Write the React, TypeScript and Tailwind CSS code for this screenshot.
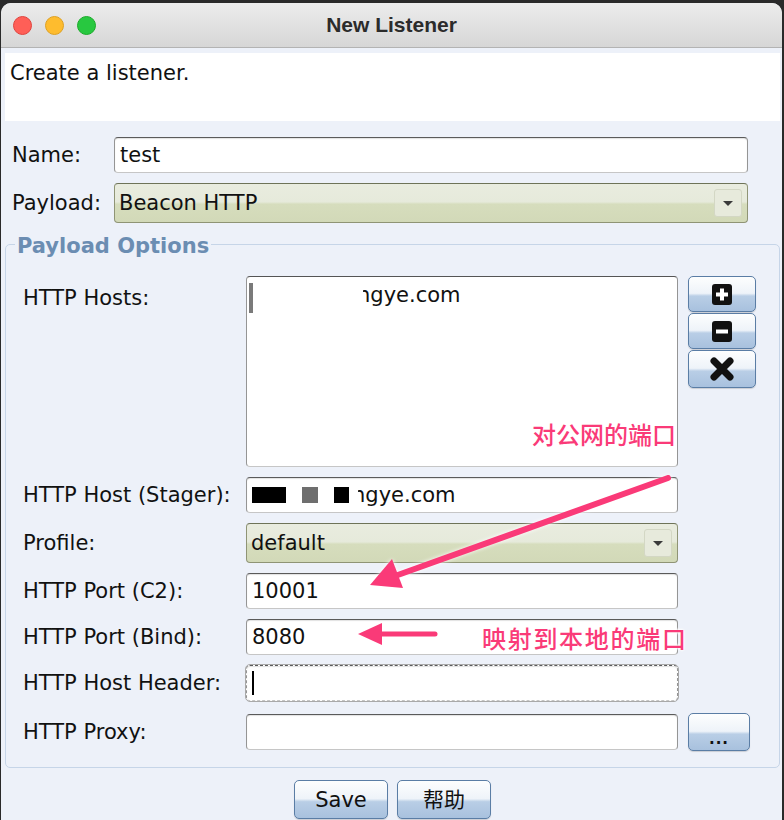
import React from 'react';

const ui = 'font-["DejaVu_Sans","Noto_Sans_CJK_SC",sans-serif]';

const inputBox =
  'h-[36px] w-[432px] rounded-[4px] border border-[#959595] border-t-[#5a5a5a] border-b-[#c6c6c6] bg-white pl-[5px] flex items-center shadow-[inset_0_1px_1px_rgba(0,0,0,0.12)]';

const aqua =
  'rounded-[5px] border border-[#5a7da5] bg-[linear-gradient(to_bottom,#fdfefe_0%,#eef3f9_48%,#b9cee6_56%,#a8c1de_100%)] shadow-[0_1px_1px_rgba(0,0,0,0.15)] flex items-center justify-center';

function ComboArrow() {
  return (
    <div className="h-[28px] w-[28px] rounded-[3px] border border-[#d3d7c4] bg-[#e7eadc] flex items-center justify-center">
      <svg width="10" height="5" viewBox="0 0 10 5">
        <path d="M0 0 H10 L5 5 Z" fill="#3a3a3a" />
      </svg>
    </div>
  );
}

function Combo({ value, width }: { value: string; width: string }) {
  return (
    <div
      className={`${width} h-[40px] rounded-[4px] border border-[#8f9475] border-t-[#6e7358] bg-[linear-gradient(to_bottom,#e9ecdf_0%,#e6eadb_47%,#d6ddbd_53%,#d2d9b8_100%)] pl-[4px] pr-[5px] flex items-center justify-between`}
    >
      <span>{value}</span>
      <ComboArrow />
    </div>
  );
}

function Row({ label, children, extra }: { label: string; children: React.ReactNode; extra?: React.ReactNode }) {
  return (
    <div className="flex items-center">
      <div className="w-[223px] shrink-0">{label}</div>
      {children}
      {extra && <div className="ml-[10px]">{extra}</div>}
    </div>
  );
}

export default function App() {
  return (
    <div className={`relative w-[784px] h-[820px] overflow-hidden bg-[#2a2a2a] pt-[3px] pl-px pr-[2px] ${ui} text-[21px] leading-[24px] text-[#111]`}>
      <div className="h-[830px] rounded-[10px] bg-[#edf1f9] flex flex-col">
        {/* title bar */}
        <div className="h-[45px] shrink-0 rounded-t-[10px] border-b border-[#b3b3b3] bg-[linear-gradient(to_bottom,#ececec,#d6d6d6)] grid grid-cols-[1fr_auto_1fr] items-center">
          <div className="flex items-center gap-[13px] pl-[12px]">
            <span className="h-[19px] w-[19px] rounded-full bg-[#ff5f57] border border-[#e0443e]" />
            <span className="h-[19px] w-[19px] rounded-full bg-[#febc2e] border border-[#dea123]" />
            <span className="h-[19px] w-[19px] rounded-full bg-[#28c840] border border-[#1aab29]" />
          </div>
          <div className='font-["Liberation_Sans",sans-serif] font-bold text-[21px] text-[#2b2b2b]'>New Listener</div>
          <div />
        </div>

        <div className="flex flex-col pl-[4px] pr-[2px] pt-[5px]">
          {/* description */}
          <div className="h-[68px] bg-white px-[5px] pt-[8px]">Create a listener.</div>

          {/* name / payload */}
          <div className="mt-[16px] flex flex-col gap-[10px] pl-[7px]">
            <div className="flex items-center">
              <div className="w-[102px]">Name:</div>
              <div className={`${inputBox} h-[34px] w-[634px]`}>test</div>
            </div>
            <div className="flex items-center">
              <div className="w-[102px]">Payload:</div>
              <Combo value="Beacon HTTP" width="w-[634px]" />
            </div>
          </div>

          {/* payload options */}
          <fieldset className="mt-[8px] w-[775px] rounded-[5px] border border-[#c6d5e8] pb-[16px]">
            <legend className="ml-[9px] px-[2px] pt-[3px] text-[21px] font-bold text-[#6b8db2]">Payload Options</legend>
            <div className="pl-[17px] pt-[18px] flex flex-col gap-[10px]">
              <div className="flex items-start">
                <div className="w-[223px] shrink-0 pt-[10px]">HTTP Hosts:</div>
                <div className="h-[191px] w-[432px] rounded-[4px] border border-[#959595] border-t-[#555] border-b-[#c6c6c6] bg-white flex items-start pt-[6px]">
                  <span className="ml-[2px] h-[30px] w-[4px] bg-[#7a7a7a]" />
                  <span className="ml-[104px] [clip-path:inset(0_0_0_6px)]">ngye.com</span>
                </div>
                <div className="ml-[10px] flex flex-col gap-px">
                  <button className={`${aqua} h-[36px] w-[68px]`}>
                    <svg width="20" height="21" viewBox="0 0 20 21">
                      <rect x="0" y="0" width="20" height="21" rx="3" fill="#111" />
                      <rect x="8" y="4.5" width="4" height="12" fill="#fff" />
                      <rect x="4" y="8.5" width="12" height="4" fill="#fff" />
                    </svg>
                  </button>
                  <button className={`${aqua} h-[36px] w-[68px]`}>
                    <svg width="20" height="21" viewBox="0 0 20 21">
                      <rect x="0" y="0" width="20" height="21" rx="3" fill="#111" />
                      <rect x="4" y="8.5" width="12" height="4" fill="#fff" />
                    </svg>
                  </button>
                  <button className={`${aqua} h-[38px] w-[68px]`}>
                    <svg width="24" height="24" viewBox="0 0 24 24">
                      <path d="M4 4 L20 20 M20 4 L4 20" stroke="#111" strokeWidth="7" strokeLinecap="round" />
                    </svg>
                  </button>
                </div>
              </div>

              <Row label="HTTP Host (Stager):">
                <div className={inputBox}>
                  <span className="h-[16px] w-[34px] bg-black" />
                  <span className="ml-[16px] h-[16px] w-[16px] bg-[#6e6e6e]" />
                  <span className="ml-[16px] h-[16px] w-[15px] bg-black" />
                  <span className="ml-[3px] [clip-path:inset(0_0_0_6px)]">ngye.com</span>
                </div>
              </Row>

              <Row label="Profile:">
                <Combo value="default" width="w-[432px]" />
              </Row>

              <Row label="HTTP Port (C2):">
                <div className={inputBox}>10001</div>
              </Row>

              <Row label="HTTP Port (Bind):">
                <div className={inputBox}>8080</div>
              </Row>

              <Row label="HTTP Host Header:">
                <div className={`${inputBox} border-dashed border-[#3f5978] border-t-[#3f5978] border-b-[#3f5978] outline outline-1 outline-[#a9a9a9]`}>
                  <span className="h-[24px] w-[2px] bg-black" />
                </div>
              </Row>

              <div className="mt-[2px]">
                <Row
                  label="HTTP Proxy:"
                  extra={
                    <button className={`${aqua} h-[38px] w-[62px] items-end pb-[6px]`}>
                      <span className="text-[15px] leading-[10px] font-bold tracking-[1px]">...</span>
                    </button>
                  }
                >
                  <div className={inputBox} />
                </Row>
              </div>
            </div>
          </fieldset>

          {/* action buttons */}
          <div className="mt-[12px] flex justify-center gap-[9px]">
            <button className={`${aqua} h-[39px] w-[94px]`}>Save</button>
            <button className={`${aqua} h-[39px] w-[94px]`}>帮助</button>
          </div>
        </div>
      </div>

      {/* screenshot annotations */}
      <svg
        className="pointer-events-none absolute left-0 top-0 drop-shadow-[0_0_2px_rgba(255,255,255,0.95)]"
        width="784"
        height="820"
      >
        <line x1="668" y1="478" x2="395" y2="576" stroke="#fa3a78" strokeWidth="6" strokeLinecap="round" />
        <path d="M370 585 L392 559 L403 588 Z" fill="#fa3a78" />
        <line x1="435" y1="634" x2="378" y2="634" stroke="#fa3a78" strokeWidth="5" strokeLinecap="round" />
        <path d="M358 634 L382 623 L382 645 Z" fill="#fa3a78" />
      </svg>
      <span className='absolute left-[532px] top-[419px] font-["Noto_Sans_CJK_SC",sans-serif] font-medium text-[24px] leading-[30px] text-[#fa3a78] [text-shadow:0_0_3px_#fff,0_0_3px_#fff,0_0_3px_#fff]'>
        对公网的端口
      </span>
      <span className='absolute left-[482px] top-[623px] font-["Noto_Sans_CJK_SC",sans-serif] font-medium text-[24px] leading-[30px] tracking-[1.7px] text-[#fa3a78] [text-shadow:0_0_3px_#fff,0_0_3px_#fff,0_0_3px_#fff]'>
        映射到本地的端口
      </span>
    </div>
  );
}
